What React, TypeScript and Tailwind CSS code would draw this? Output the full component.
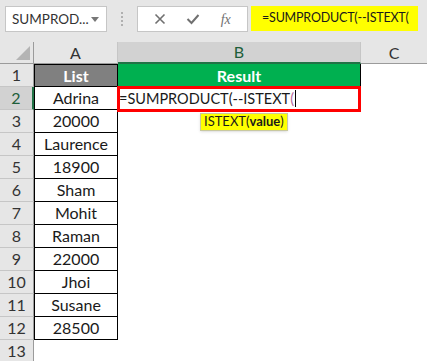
import React from 'react';

const rows = ['Adrina', '20000', 'Laurence', '18900', 'Sham', 'Mohit', 'Raman', '22000', 'Jhoi', 'Susane', '28500'];

const font = { fontFamily: 'Lato, "Open Sans", sans-serif' };

const RowHead: React.FC<{ n: number; active?: boolean }> = ({ n, active }) => (
  <div
    className={`flex items-center justify-center border-b border-r text-[16px] ${
      active
        ? 'bg-[#d2d2d2] border-r-[#217346] border-r-2 border-b-[#c6c6c6] text-[#1e5e3a]'
        : 'bg-[#e6e6e6] border-b-[#c6c6c6] border-r-[#9b9b9b] text-[#333]'
    }`}
  >
    {n}
  </div>
);

const App: React.FC = () => {
  return (
    <div className="w-[427px] h-[361px] overflow-hidden bg-white text-[#1a1a1a]" style={font}>
      {/* Formula toolbar */}
      <div className="h-[42px] bg-[#e6e6e6] flex items-start pt-[6px] pl-[5px]">
        <div className="w-[102px] h-[26px] bg-white border border-[#c6c6c6] flex items-center justify-between pl-[6px] pr-[7px] text-[13.5px] text-[#333] whitespace-nowrap">
          <span>SUMPROD...</span>
          <span className="w-0 h-0 border-l-[4px] border-r-[4px] border-t-[5px] border-l-transparent border-r-transparent border-t-[#777]" />
        </div>
        <div className="w-[30px] h-[26px] flex flex-col items-center justify-center gap-[2px]">
          <span className="w-[2px] h-[2px] bg-[#b0b0b0]" />
          <span className="w-[2px] h-[2px] bg-[#b0b0b0]" />
          <span className="w-[2px] h-[2px] bg-[#b0b0b0]" />
          <span className="w-[2px] h-[2px] bg-[#b0b0b0]" />
        </div>
        <div className="w-[111px] h-[26px] bg-white border border-[#c6c6c6] flex items-center justify-around px-[6px]">
          <svg width="12" height="12" viewBox="0 0 12 12">
            <path d="M1.5 1.5 L10.5 10.5 M10.5 1.5 L1.5 10.5" stroke="#707070" strokeWidth="1.6" />
          </svg>
          <svg width="14" height="12" viewBox="0 0 14 12">
            <path d="M1.5 6 L5.5 10 L12.5 2" stroke="#707070" strokeWidth="2" fill="none" />
          </svg>
          <span className="italic text-[14px] text-[#707070]" style={{ fontFamily: '"Liberation Serif", serif' }}>
            fx
          </span>
        </div>
        <div className="ml-[3px] w-[167px] h-[25px] bg-[#ffff00] flex items-center pl-[11px] text-[12.5px] tracking-[-0.2px] text-[#1a1a1a] whitespace-nowrap">
          =SUMPRODUCT(--ISTEXT(
        </div>
      </div>

      {/* Sheet grid */}
      <div className="grid grid-cols-[34px_84px_243px_66px] grid-rows-[22px_23px_repeat(12,23px)] relative">
        {/* Column headers */}
        <div className="bg-[#e6e6e6] border-r border-b border-[#9b9b9b] relative overflow-hidden">
          <span
            className="absolute right-[3px] bottom-[3px] w-0 h-0"
            style={{ borderBottom: '14px solid #b4b4b4', borderLeft: '14px solid transparent' }}
          />
        </div>
        <div className="bg-[#e6e6e6] border-r border-[#c6c6c6] border-b border-b-[#9b9b9b] flex items-center justify-center text-[16px] text-[#333]">
          A
        </div>
        <div className="bg-[#d2d2d2] border-r border-[#c6c6c6] border-b-2 border-b-[#217346] flex items-center justify-center text-[16px] text-[#1e5e3a]">
          B
        </div>
        <div className="bg-[#e6e6e6] border-b border-b-[#9b9b9b] flex items-center justify-center text-[16px] text-[#333]">
          C
        </div>

        {/* Row 1 */}
        <RowHead n={1} />
        <div className="bg-[#808080] border border-black flex items-center justify-center text-white font-bold text-[16px]">
          List
        </div>
        <div className="bg-[#00b050] border-r border-black flex items-center justify-center text-white font-bold text-[16px]">
          Result
        </div>
        <div />

        {/* Data rows */}
        {rows.map((v, i) => (
          <React.Fragment key={i}>
            <RowHead n={i + 2} active={i === 0} />
            <div className="border-x border-b border-black flex items-center justify-center text-[16px]">{v}</div>
            {i === 0 ? (
              <div className="relative flex items-center text-[14.5px] whitespace-nowrap pl-[1px]">
                <span>=SUMPRODUCT(--ISTEXT</span>
                <span className="text-[#b5679b]">(</span>
                <span className="w-[1px] h-[17px] bg-black ml-[1px]" />
                <div className="absolute -left-[1px] -top-[1px] w-[244px] h-[26px] border-[3px] border-[#ff0000]" />
                <div className="absolute left-[82px] top-[26px] h-[18px] px-[3px] bg-[#ffff00] border border-[#c8c8a0] shadow-sm text-[13px] flex items-center z-10">
                  ISTEXT(<b>value</b>)
                </div>
              </div>
            ) : (
              <div />
            )}
            <div />
          </React.Fragment>
        ))}

        {/* Row 13 */}
        <RowHead n={13} />
        <div />
        <div />
        <div />
      </div>
    </div>
  );
};

export default App;
